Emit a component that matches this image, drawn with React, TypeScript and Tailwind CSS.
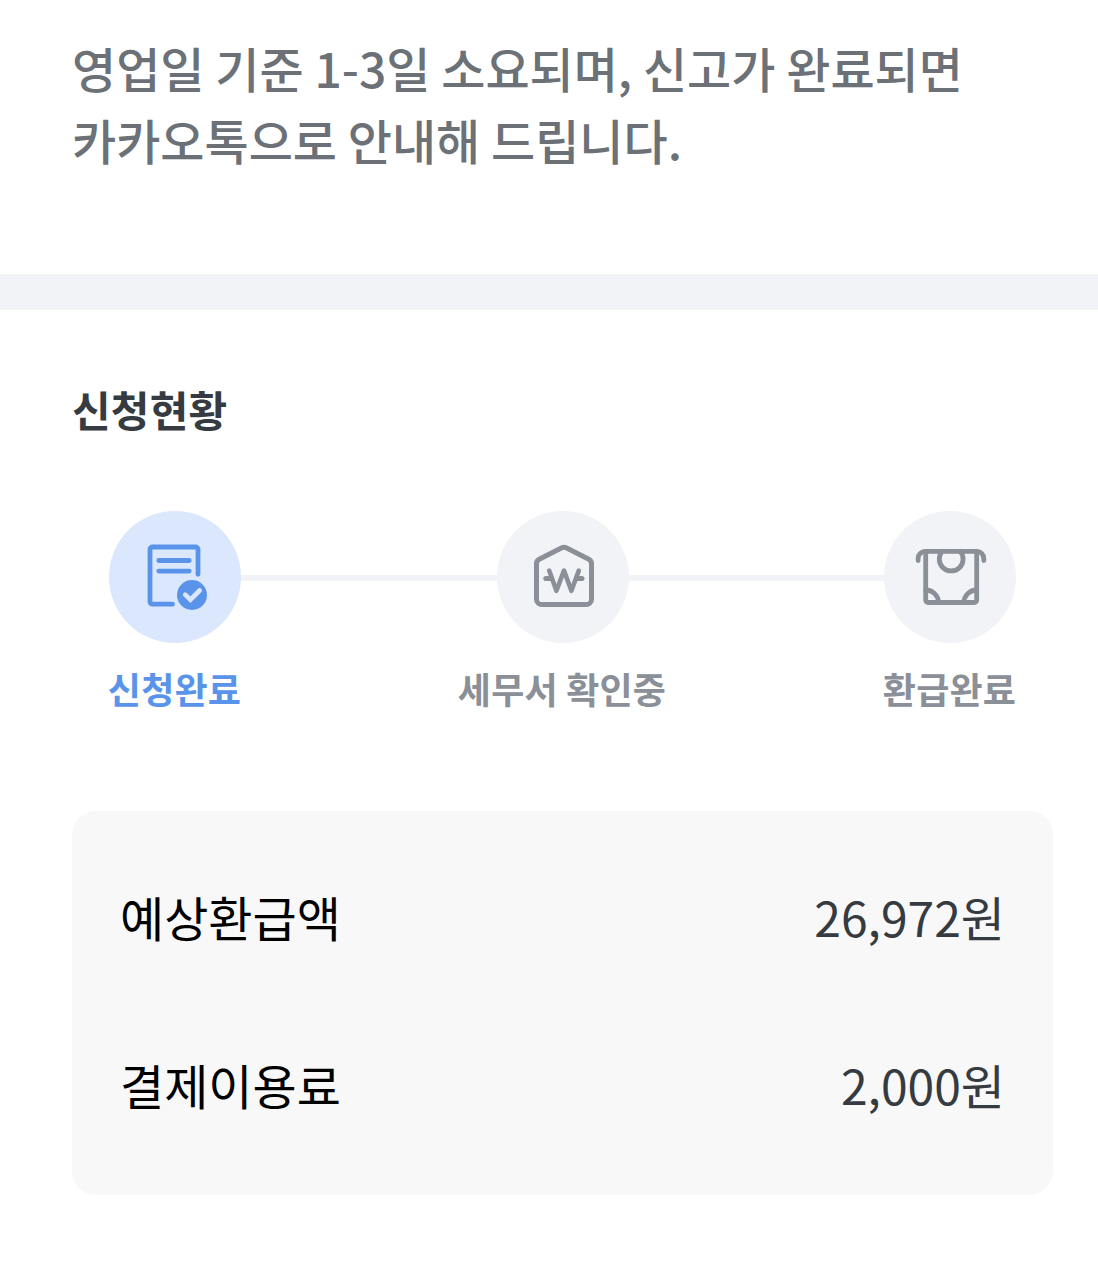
import { Fragment, type ReactNode } from "react"

type Step = {
  id: number
  label: string
  active: boolean
  icon: ReactNode
}

type Amount = {
  label: string
  value: number
}

function DocumentCheckIcon() {
  return (
    <svg viewBox="0 0 132 132" className="size-full" fill="none" stroke="currentColor" strokeWidth="4.8" strokeLinecap="round" strokeLinejoin="round">
      <path d="M89 63.3V38.5a2.5 2.5 0 0 0-2.5-2.5h-43a2.5 2.5 0 0 0-2.5 2.5v52.2a2.5 2.5 0 0 0 2.5 2.5h20" />
      <path d="M49.8 49.5h30.4M49.8 60.1h30.4" />
      <circle cx="83" cy="84" r="15" fill="currentColor" stroke="none" />
      <path d="M76.2 83.6l5.2 5.1 9.2-9.2" stroke="#dae7fd" strokeWidth="4.6" strokeLinejoin="miter" />
    </svg>
  )
}

function TaxOfficeIcon() {
  return (
    <svg viewBox="0 0 132 132" className="size-full" fill="none" stroke="currentColor" strokeWidth="5" strokeLinecap="round" strokeLinejoin="round">
      <path d="M64.8 36.8a4.6 4.6 0 0 1 4.4 0l22.6 11.5a5 5 0 0 1 2.7 4.5v35.4a5.4 5.4 0 0 1-5.4 5.4H44.9a5.4 5.4 0 0 1-5.4-5.4V52.8a5 5 0 0 1 2.7-4.5z" />
      <path d="M52.2 59.6l7.2 20.2L67 59.6l7.4 20.2 7.4-20.2" strokeWidth="4.6" />
      <path d="M48.8 67.5h5.4M79.6 67.5h5.4" />
    </svg>
  )
}

function RefundIcon() {
  return (
    <svg viewBox="0 0 132 132" className="size-full" fill="none" stroke="currentColor" strokeWidth="4.8" strokeLinecap="round" strokeLinejoin="round">
      <path d="M34.1 49.6v-2.2a7 7 0 0 1 7-7h51.7a7 7 0 0 1 7 7v2.2" />
      <path d="M41.7 40.4V89a2.5 2.5 0 0 0 2.5 2.5h46a2.5 2.5 0 0 0 2.5-2.5V40.4" />
      <path d="M58.1 40.4a11.9 11.9 0 1 0 18.2 0" />
      <path d="M41.7 79a12.8 12.8 0 0 1 12.8 12.5M92.7 79a12.8 12.8 0 0 0-12.8 12.5" />
    </svg>
  )
}

const steps: Step[] = [
  { id: 1, label: "신청완료", active: true, icon: <DocumentCheckIcon /> },
  { id: 2, label: "세무서 확인중", active: false, icon: <TaxOfficeIcon /> },
  { id: 3, label: "환급완료", active: false, icon: <RefundIcon /> },
]

const amounts: Amount[] = [
  { label: "예상환급액", value: 26972 },
  { label: "결제이용료", value: 2000 },
]

export default function App() {
  return (
    <main className="w-full h-[1268px] bg-white overflow-hidden font-['Noto_Sans_CJK_KR',sans-serif]">

      {/* Notice */}
      <section className="h-[274px] px-[72px] pt-[31px]">
        <p className="text-[48px] leading-[72px] font-medium text-[#6c7178]">
          영업일 기준 1-3일 소요되며, 신고가 완료되면
          <br />
          카카오톡으로 안내해 드립니다.
        </p>
      </section>

      <div className="h-9 bg-[#f1f3f7]" />

      {/* Application status */}
      <section className="pt-[67px]">
        <h2 className="px-[72px] text-[42px] leading-[63px] font-bold tracking-[0.2px] text-[#353b40]">신청현황</h2>

        <div className="flex items-start mt-[71px] ml-[109px] mr-[82px]">
          {steps.map((step, index) => (
            <Fragment key={step.id}>
              {index > 0 && <div className="flex-1 h-1.5 mt-16 bg-[#f1f3f7]" />}
              <div className={`flex flex-col items-center w-[132px] shrink-0 ${step.active ? "text-[#5a93ea]" : "text-[#8a8f98]"}`}>
                <div className={`size-[132px] rounded-full ${step.active ? "bg-[#dae7fd]" : "bg-[#f1f3f7]"}`}>
                  {step.icon}
                </div>
                <span className="mt-[18px] -ml-px text-[36px] leading-[54px] font-bold tracking-[0.2px] whitespace-nowrap">{step.label}</span>
              </div>
            </Fragment>
          ))}
        </div>
      </section>

      {/* Amounts */}
      <section className="flex flex-col gap-24 h-[384px] mt-24 ml-[72px] mr-[45px] px-12 pt-[69px] rounded-3xl bg-[#f8f8f8]">
        {amounts.map((amount) => (
          <div key={amount.label} className="flex justify-between text-[48px] leading-[72px]">
            <span className="text-black">{amount.label}</span>
            <span className="text-[#353b40]">{amount.value.toLocaleString("ko-KR")}원</span>
          </div>
        ))}
      </section>

    </main>
  )
}
